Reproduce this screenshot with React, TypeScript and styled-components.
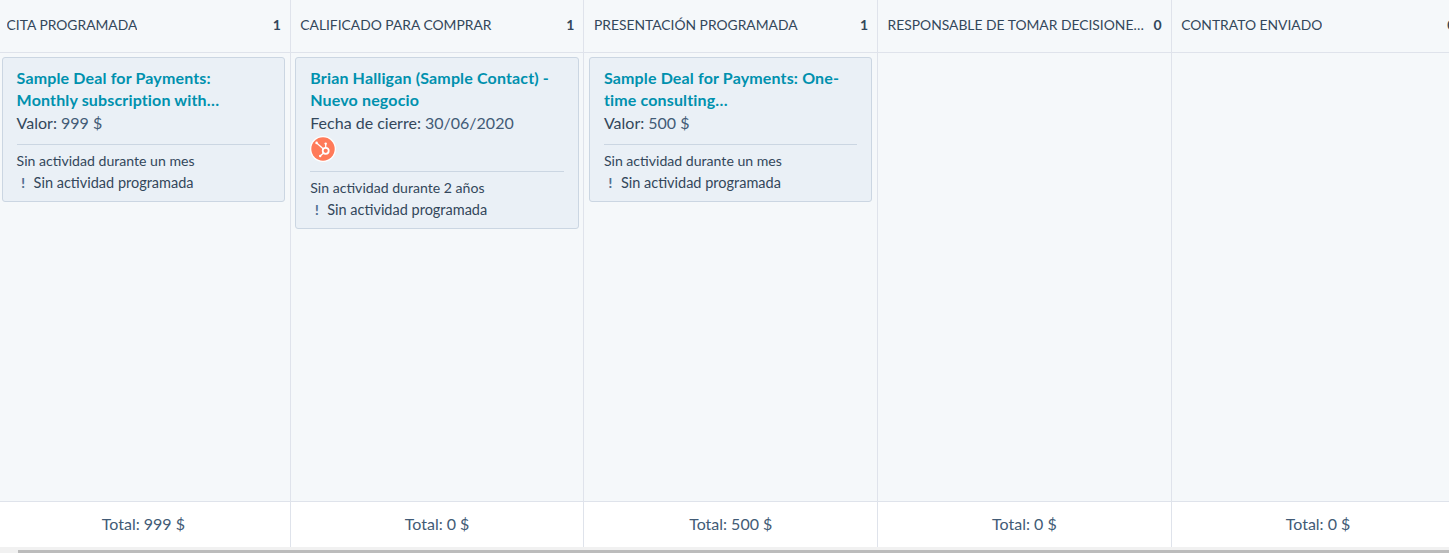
import styled, { createGlobalStyle } from "styled-components";

const GlobalStyle = createGlobalStyle`
  html, body {
    margin: 0;
    padding: 0;
    background: #fff;
    overflow: hidden;
  }
  body {
    font-family: Lato, "Open Sans", sans-serif;
    color: #33475b;
  }
`;

const S = {
  Page: styled.div`
    width: 1449px;
    height: 553px;
    display: flex;
    flex-direction: column;
    overflow: hidden;
  `,
  Viewport: styled.div`
    flex: 1;
    min-height: 0;
    overflow: hidden;
  `,
  // the board is scrolled a few pixels to the right, so the first column is cut off
  Board: styled.div`
    height: 100%;
    display: flex;
    margin-left: -2.9px;
  `,
  Column: styled.section`
    flex: 0 0 293.67px;
    min-width: 0;
    box-sizing: border-box;
    display: flex;
    flex-direction: column;
    border-right: 1px solid #dfe3eb;
  `,
  Header: styled.header`
    flex: 0 0 53px;
    box-sizing: border-box;
    display: flex;
    align-items: center;
    justify-content: space-between;
    gap: 7px;
    padding: 0 9px 3px 9.5px;
    background: #f5f8fa;
    border-bottom: 1px solid #dfe3eb;
    font-size: 13.85px;
    color: #33475b;
  `,
  HeaderTitle: styled.span`
    min-width: 0;
    overflow: hidden;
    white-space: nowrap;
    text-overflow: ellipsis;
  `,
  Count: styled.span`
    flex: none;
    font-weight: 700;
    font-size: 14px;
  `,
  Body: styled.div`
    flex: 1;
    min-height: 0;
    background: #f5f8fa;
    padding: 4px 4.7px 0 4.5px;
  `,
  Card: styled.article`
    box-sizing: border-box;
    background: #eaf0f6;
    border: 1px solid #cbd6e2;
    border-radius: 3px;
    padding: 9px 14px 7px 14px;
  `,
  Title: styled.a`
    display: block;
    font-size: 16px;
    font-weight: 700;
    line-height: 22px;
    letter-spacing: 0.15px;
    color: #0091ae;
  `,
  Property: styled.div`
    font-size: 16px;
    line-height: 23px;
    color: #33475b;
  `,
  PropertyValue: styled.span`
    color: #425b76;
  `,
  Avatar: styled.div`
    width: 26px;
    height: 26px;
    margin-top: 2px;
    display: flex;
  `,
  Divider: styled.hr<{ $tight?: boolean }>`
    margin: ${p => (p.$tight ? 9 : 10)}px 0 5px;
    border: 0;
    border-top: 1px solid #cbd6e2;
  `,
  Activity: styled.div`
    font-size: 14.1px;
    line-height: 22px;
    color: #33475b;
  `,
  Warning: styled.div`
    display: flex;
    align-items: center;
    gap: 8px;
    padding-left: 4px;
    font-size: 14.5px;
    line-height: 22px;
    color: #33475b;
  `,
  Mark: styled.span`
    width: 5px;
    text-align: center;
    font-size: 13px;
    font-weight: 900;
    color: #516f90;
  `,
  Footer: styled.footer`
    flex: 0 0 46px;
    box-sizing: border-box;
    display: flex;
    align-items: center;
    justify-content: center;
    padding-bottom: 2px;
    background: #fff;
    border-top: 1px solid #dfe3eb;
    font-size: 16px;
    color: #425b76;
  `,
  ScrollTrack: styled.div`
    flex: 0 0 6px;
    box-sizing: border-box;
    background: #f1f1f1;
    padding: 3px 0 0 18px;
  `,
  ScrollThumb: styled.div`
    height: 100%;
    background: #bcbcbc;
  `,
};

const HubspotAvatar = () => (
  <svg width="26" height="26" viewBox="0 0 26 26" aria-hidden="true">
    <circle cx="13" cy="13" r="13" fill="#fff" />
    <circle cx="13" cy="13" r="11.7" fill="#ff7a59" />
    <g stroke="#fff" fill="none">
      <circle cx="15.7" cy="14.8" r="3" strokeWidth="1.8" />
      <path d="M15.7 11.8V8M13.4 12.9L7 7.2M13.6 17l-3.2 2.8" strokeWidth="1.3" />
    </g>
    <circle cx="15.7" cy="7.6" r="1.2" fill="#fff" />
    <circle cx="6.6" cy="6.9" r="1.3" fill="#fff" />
    <circle cx="10.2" cy="20" r="1.2" fill="#fff" />
  </svg>
);

type Deal = {
  title: string[];
  label: string;
  value: string;
  avatar?: boolean;
  activity: string;
};

const columns: { name: string; count: string; total: string; deal?: Deal }[] = [
  {
    name: "CITA PROGRAMADA",
    count: "1",
    total: "Total: 999 $",
    deal: {
      title: ["Sample Deal for Payments:", "Monthly subscription with…"],
      label: "Valor:",
      value: "999 $",
      activity: "Sin actividad durante un mes",
    },
  },
  {
    name: "CALIFICADO PARA COMPRAR",
    count: "1",
    total: "Total: 0 $",
    deal: {
      title: ["Brian Halligan (Sample Contact) -", "Nuevo negocio"],
      label: "Fecha de cierre:",
      value: "30/06/2020",
      avatar: true,
      activity: "Sin actividad durante 2 años",
    },
  },
  {
    name: "PRESENTACIÓN PROGRAMADA",
    count: "1",
    total: "Total: 500 $",
    deal: {
      title: ["Sample Deal for Payments: One-", "time consulting…"],
      label: "Valor:",
      value: "500 $",
      activity: "Sin actividad durante un mes",
    },
  },
  { name: "RESPONSABLE DE TOMAR DECISIONES INFORMADO", count: "0", total: "Total: 0 $" },
  { name: "CONTRATO ENVIADO", count: "0", total: "Total: 0 $" },
];

export default function App() {
  return (
    <S.Page>
      <GlobalStyle />
      <S.Viewport>
        <S.Board>
          {columns.map(col => (
            <S.Column key={col.name}>
              <S.Header>
                <S.HeaderTitle>{col.name}</S.HeaderTitle>
                <S.Count>{col.count}</S.Count>
              </S.Header>
              <S.Body>
                {col.deal && (
                  <S.Card>
                    <S.Title>
                      {col.deal.title[0]}
                      <br />
                      {col.deal.title[1]}
                    </S.Title>
                    <S.Property>
                      {col.deal.label} <S.PropertyValue>{col.deal.value}</S.PropertyValue>
                    </S.Property>
                    {col.deal.avatar && (
                      <S.Avatar>
                        <HubspotAvatar />
                      </S.Avatar>
                    )}
                    <S.Divider $tight={col.deal.avatar} />
                    <S.Activity>{col.deal.activity}</S.Activity>
                    <S.Warning>
                      <S.Mark>!</S.Mark>
                      Sin actividad programada
                    </S.Warning>
                  </S.Card>
                )}
              </S.Body>
              <S.Footer>{col.total}</S.Footer>
            </S.Column>
          ))}
        </S.Board>
      </S.Viewport>
      <S.ScrollTrack>
        <S.ScrollThumb />
      </S.ScrollTrack>
    </S.Page>
  );
}
